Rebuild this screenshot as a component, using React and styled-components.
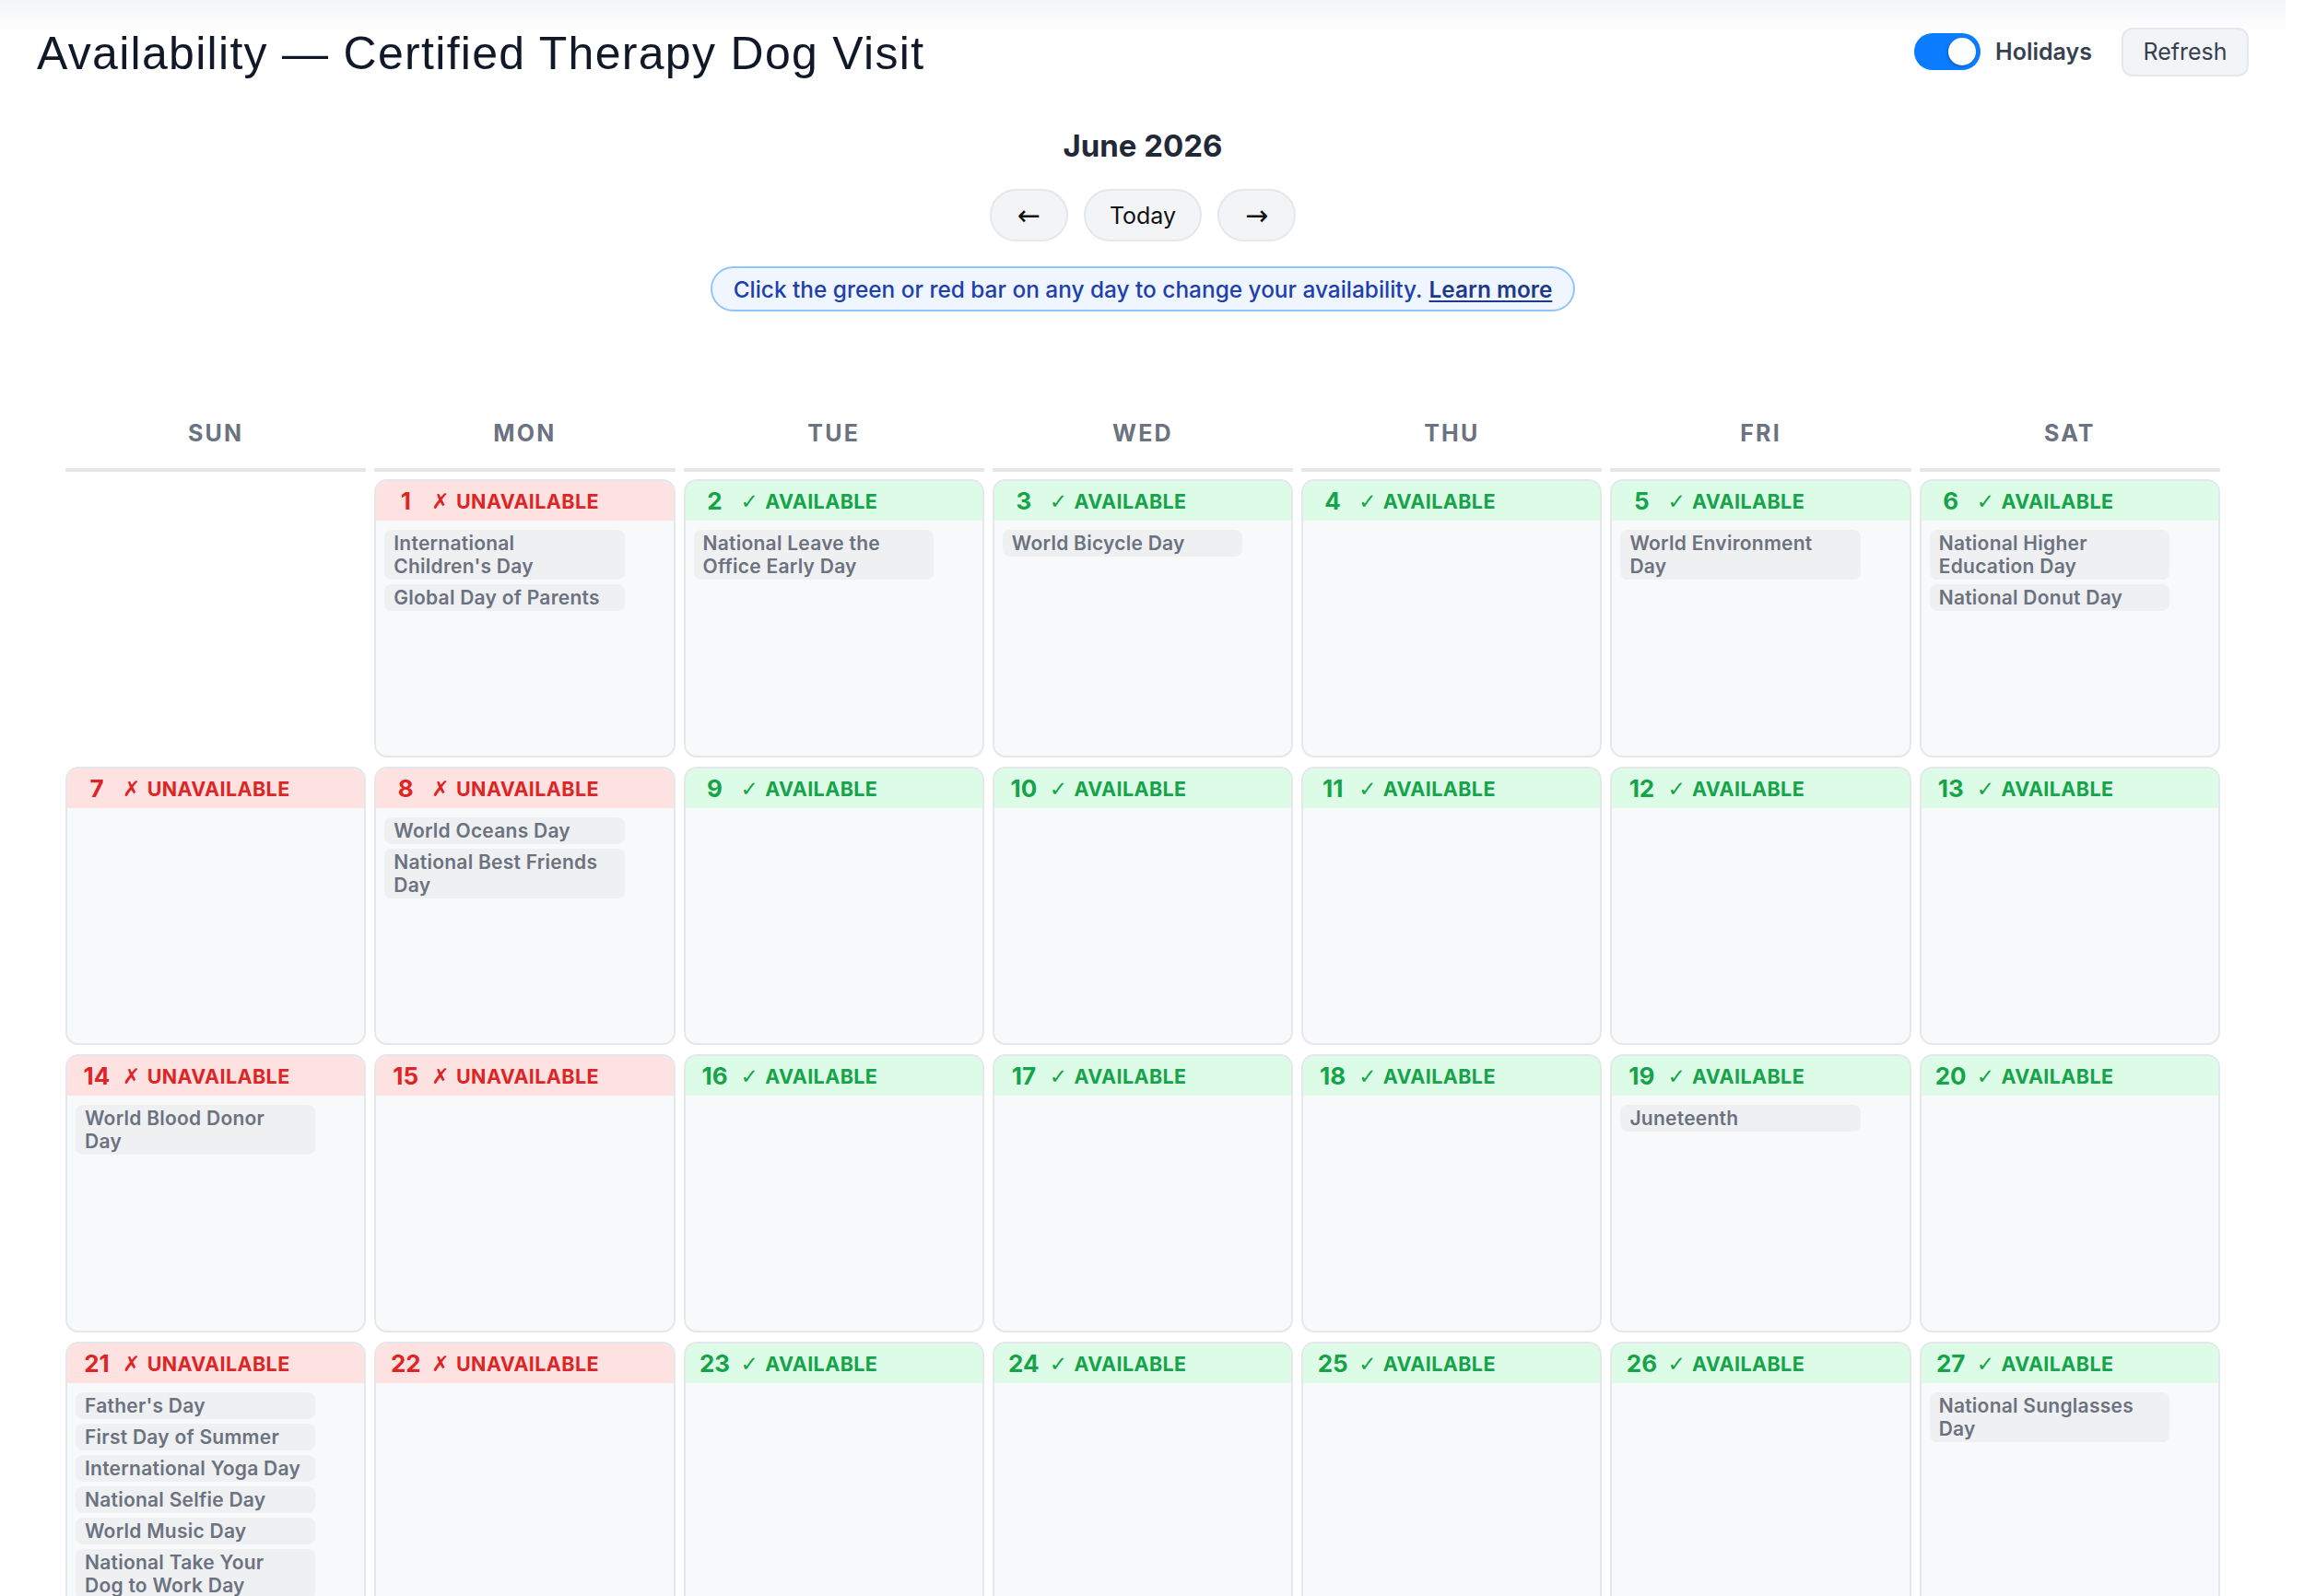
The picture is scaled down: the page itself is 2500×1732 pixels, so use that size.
import React from "react";
import styled, { createGlobalStyle } from "styled-components";

const Global = createGlobalStyle`
  html, body { margin: 0; padding: 0; background: #ffffff; overflow: hidden; }
  body { font-family: Inter, "Noto Sans", "Liberation Sans", sans-serif; color: #111827; }
  * { box-sizing: border-box; }
`;

const Page = styled.div`
  width: 2480px;
  min-height: 1732px;
  background: #ffffff;
`;

const Header = styled.header`
  display: flex;
  align-items: center;
  justify-content: space-between;
  height: 112px;
  padding: 4px 40px 0 40px;
  background: linear-gradient(to bottom, #f4f5f7 0px, #ffffff 38px);
`;

const Title = styled.h1`
  margin: 0;
  font-family: "Liberation Sans", Inter, sans-serif;
  font-weight: 400;
  font-size: 50px;
  letter-spacing: 1.3px;
  color: #111827;
  line-height: 60px;
`;

const Controls = styled.div`
  display: flex;
  align-items: center;
  margin-top: -4px;
`;

const ToggleTrack = styled.div`
  position: relative;
  width: 72px;
  height: 40px;
  border-radius: 20px;
  background: ${(p) => (p.$on ? "#0a7cff" : "#d1d5db")};
`;

const ToggleKnob = styled.div`
  position: absolute;
  top: 5px;
  left: ${(p) => (p.$on ? "37px" : "5px")};
  width: 30px;
  height: 30px;
  border-radius: 50%;
  background: #ffffff;
  box-shadow: -1px 1px 3px rgba(0, 0, 0, 0.25);
`;

const ToggleLabel = styled.span`
  margin-left: 16px;
  font-size: 25px;
  font-weight: 600;
  color: #374151;
`;

const RefreshButton = styled.button`
  margin-left: 32px;
  height: 53px;
  width: 138px;
  padding: 0;
  border: 2px solid #e5e7eb;
  border-radius: 12px;
  background: #f3f4f6;
  font-family: Inter, sans-serif;
  font-size: 25px;
  color: #374151;
`;

const MonthSection = styled.section`
  display: flex;
  flex-direction: column;
  align-items: center;
`;

const MonthTitle = styled.h2`
  margin: 26px 0 0 0;
  font-size: 33px;
  line-height: 40px;
  font-weight: 700;
  color: #1f2937;
`;

const Nav = styled.div`
  display: flex;
  gap: 17px;
  margin-top: 27px;
`;

const NavButton = styled.button`
  height: 57px;
  width: ${(p) => p.$w}px;
  padding: 0;
  border: 2px solid #e5e7eb;
  border-radius: 29px;
  background: #f3f4f6;
  font-family: ${(p) => (p.$arrow ? '"DejaVu Sans", sans-serif' : "Inter, sans-serif")};
  font-size: ${(p) => (p.$arrow ? "30px" : "25px")};
  font-weight: 400;
  color: #111111;
`;

const InfoPill = styled.div`
  margin-top: 27px;
  height: 49px;
  display: flex;
  align-items: center;
  padding: 0 23px;
  border: 2px solid #93c5fd;
  border-radius: 25px;
  background: #eff6ff;
  font-size: 24.4px;
  font-weight: 500;
  color: #1e40af;
`;

const LearnMore = styled.a`
  margin-left: 7px;
  color: #1e3a8a;
  font-weight: 600;
  text-decoration: underline;
  text-underline-offset: 3px;
`;

const CalendarWrap = styled.div`
  padding: 0 71px;
  margin-top: 117px;
`;

const WeekHeader = styled.div`
  display: grid;
  grid-template-columns: repeat(7, 1fr);
  column-gap: 9px;
`;

const WeekDay = styled.div`
  text-align: center;
  font-size: 25px;
  line-height: 30px;
  font-weight: 700;
  letter-spacing: 2.2px;
  color: #6b7280;
  padding-bottom: 23px;
  border-bottom: 4px solid #e5e7eb;
`;

const Grid = styled.div`
  display: grid;
  grid-template-columns: repeat(7, 1fr);
  column-gap: 9px;
  row-gap: 10px;
  margin-top: 8px;
`;

const Blank = styled.div`
  height: 302px;
`;

const Cell = styled.div`
  height: 302px;
  border: 2px solid #e5e7eb;
  border-radius: 14px;
  background: #f8f9fa;
  overflow: hidden;
  display: flex;
  flex-direction: column;
`;

const Band = styled.div`
  height: 43px;
  flex: none;
  display: flex;
  align-items: center;
  padding: 0 14px;
  background: ${(p) => (p.$available ? "#dcfce7" : "#fee2e2")};
  color: ${(p) => (p.$available ? "#16a34a" : "#dc2626")};
`;

const DayNum = styled.span`
  width: 36px;
  text-align: center;
  font-size: 26px;
  font-weight: 700;
`;

const Status = styled.span`
  display: flex;
  align-items: center;
  margin-left: 10px;
  font-size: 21.5px;
  font-weight: 700;
  letter-spacing: 0.4px;
`;

const Mark = styled.span`
  font-family: "DejaVu Sans", sans-serif;
  font-weight: 700;
  font-size: 23px;
  margin-right: 7px;
`;

const Body = styled.div`
  display: flex;
  flex-direction: column;
  align-items: flex-start;
  gap: 5px;
  padding: 10px 9px;
`;

const Chip = styled.div`
  width: calc(100% - 44px);
  padding: 2px 10px;
  border-radius: 8px;
  background: #eff0f2;
  font-size: 21px;
  line-height: 25px;
  font-weight: 600;
  letter-spacing: 0.25px;
  color: #6b7280;
`;

const holidays = {
  1: ["International Children's Day", "Global Day of Parents"],
  2: ["National Leave the Office Early Day"],
  3: ["World Bicycle Day"],
  5: ["World Environment Day"],
  6: ["National Higher Education Day", "National Donut Day"],
  8: ["World Oceans Day", "National Best Friends Day"],
  14: ["World Blood Donor Day"],
  19: ["Juneteenth"],
  21: [
    "Father's Day",
    "First Day of Summer",
    "International Yoga Day",
    "National Selfie Day",
    "World Music Day",
    "National Take Your Dog to Work Day",
  ],
  27: ["National Sunglasses Day"],
};

const days = ["SUN", "MON", "TUE", "WED", "THU", "FRI", "SAT"];

export default function App() {
  const cells = [];
  const offset = 1; // June 1, 2026 is a Monday
  for (let i = 0; i < offset; i++) cells.push(<Blank key={"b" + i} />);
  for (let d = 1; d <= 30; d++) {
    const dow = (offset + d - 1) % 7;
    const available = !(dow === 0 || dow === 1);
    cells.push(
      <Cell key={d}>
        <Band $available={available}>
          <DayNum>{d}</DayNum>
          <Status>
            <Mark>{available ? "✓" : "✗"}</Mark>
            {available ? "AVAILABLE" : "UNAVAILABLE"}
          </Status>
        </Band>
        <Body>
          {(holidays[d] || []).map((h) => (
            <Chip key={h}>{h}</Chip>
          ))}
        </Body>
      </Cell>
    );
  }

  return (
    <Page>
      <Global />
      <Header>
        <Title>Availability — Certified Therapy Dog Visit</Title>
        <Controls>
          <ToggleTrack $on>
            <ToggleKnob $on />
          </ToggleTrack>
          <ToggleLabel>Holidays</ToggleLabel>
          <RefreshButton>Refresh</RefreshButton>
        </Controls>
      </Header>
      <MonthSection>
        <MonthTitle>June 2026</MonthTitle>
        <Nav>
          <NavButton $w={85} $arrow>←</NavButton>
          <NavButton $w={128}>Today</NavButton>
          <NavButton $w={85} $arrow>→</NavButton>
        </Nav>
        <InfoPill>
          Click the green or red bar on any day to change your availability.
          <LearnMore>Learn more</LearnMore>
        </InfoPill>
      </MonthSection>
      <CalendarWrap>
        <WeekHeader>
          {days.map((d) => (
            <WeekDay key={d}>{d}</WeekDay>
          ))}
        </WeekHeader>
        <Grid>{cells}</Grid>
      </CalendarWrap>
    </Page>
  );
}
